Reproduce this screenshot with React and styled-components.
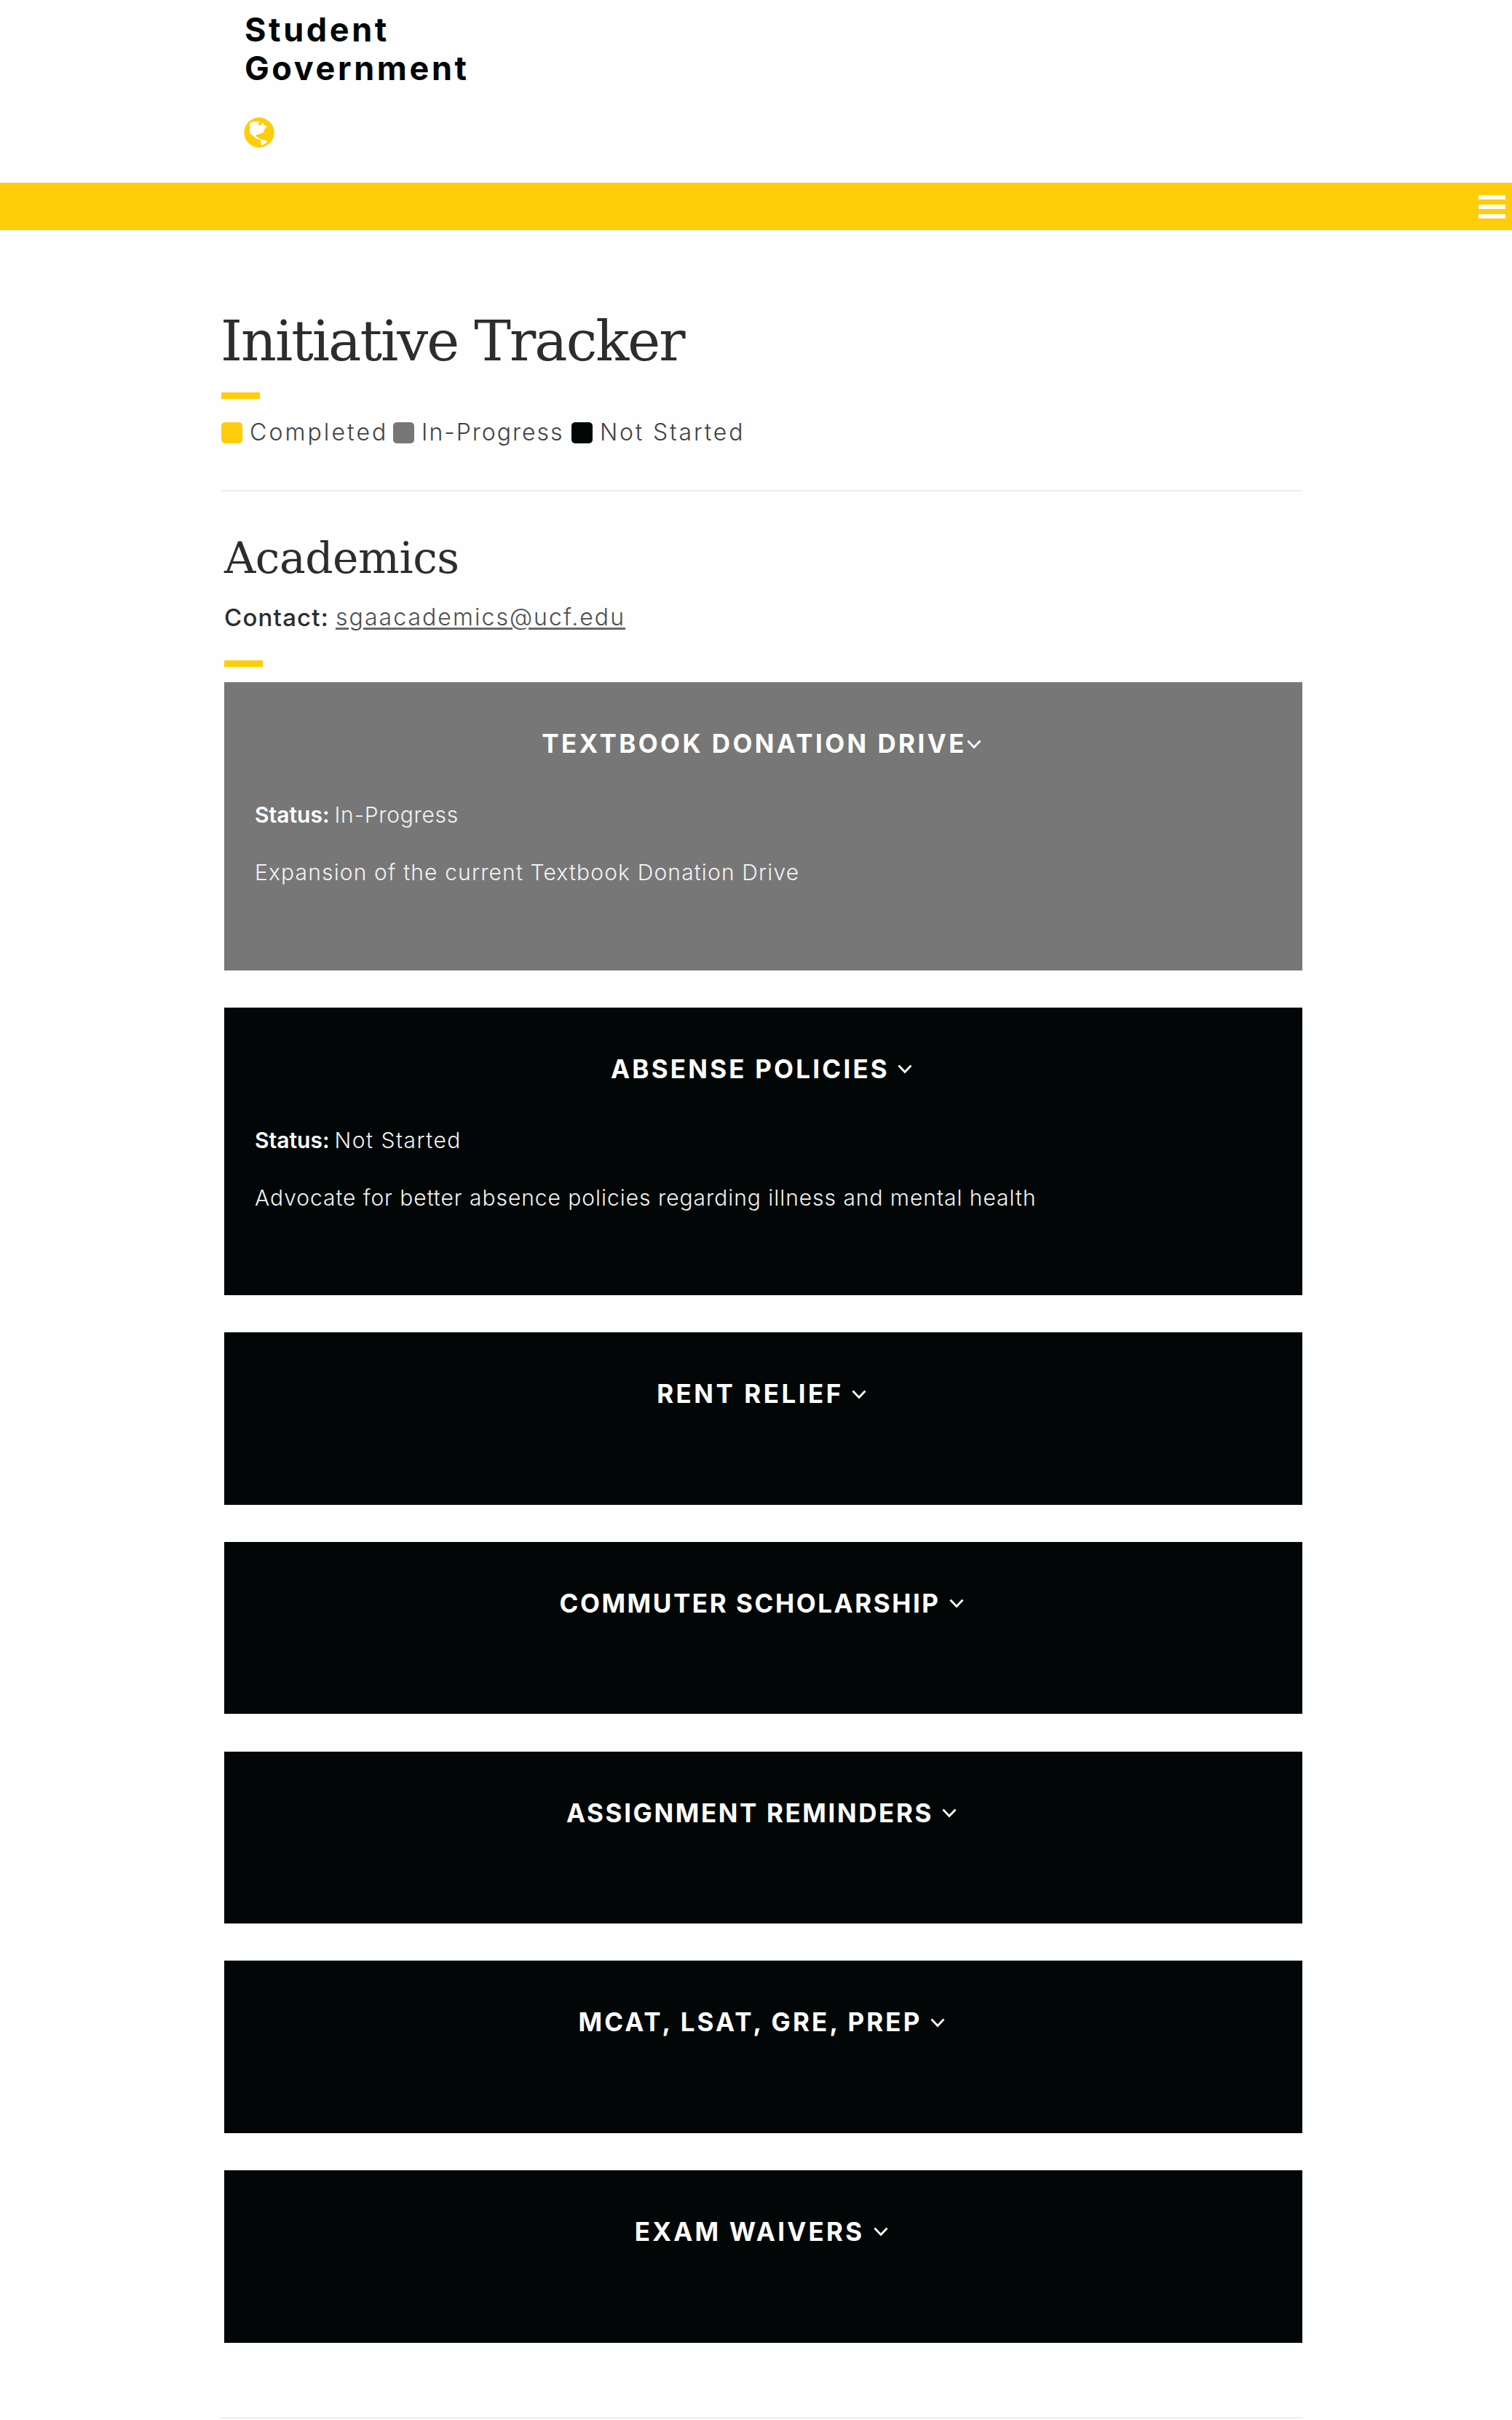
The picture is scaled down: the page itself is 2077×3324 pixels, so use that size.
import React from "react";
import styled, { createGlobalStyle } from "styled-components";

const GlobalStyle = createGlobalStyle`
  * { box-sizing: border-box; }
  body {
    margin: 0;
    background: #fefefe;
    color: #2b2d2e;
    font-family: Inter, "Liberation Sans", sans-serif;
    overflow-x: hidden;
  }
  h1, h2, h3, p, ul { margin: 0; padding: 0; }
`;

const Page = styled.div`
  height: 3324px;
  overflow: hidden;
`;

const Header = styled.header`
  display: flex;
  flex-direction: column;
  align-items: flex-start;
  height: 251px;
  padding: 14px 0 0 336px;
`;

const Logo = styled.a`
  width: 340px;
  font-size: 45px;
  font-weight: 700;
  line-height: 53px;
  letter-spacing: 3.6px;
  color: #020606;
`;

const GlobeIcon = styled.svg`
  display: block;
  width: 42px;
  height: 42px;
  margin: 41px 0 0 -1px;
`;

const NavBar = styled.nav`
  display: flex;
  justify-content: flex-end;
  align-items: center;
  height: 65px;
  padding-right: 9px;
  background: #ffcd0a;
`;

const MenuButton = styled.button`
  display: flex;
  flex-direction: column;
  gap: 7px;
  width: 37px;
  padding: 0;
  border: 0;
  background: none;
`;

const MenuLine = styled.span`
  height: 6px;
  background: #fff;
`;

const Main = styled.main`
  width: 1485px;
  margin-left: 304px;
`;

const Title = styled.h1`
  padding-top: 103px;
  font-family: "DejaVu Serif", serif;
  font-size: 76px;
  font-weight: 400;
  line-height: 100px;
  letter-spacing: -2px;
  text-indent: -1px;
`;

const Dash = styled.div`
  width: 53px;
  height: 9px;
  margin-top: ${(p) => p.$top}px;
  background: #ffcd0a;
`;

const Legend = styled.ul`
  display: flex;
  align-items: center;
  height: 30px;
  margin-top: 31px;
  list-style: none;
`;

const LegendItem = styled.li`
  display: flex;
  align-items: center;
  width: ${(p) => p.$width}px;
  gap: 10px;
  font-size: 32px;
  font-weight: 300;
  line-height: 30px;
  letter-spacing: ${(p) => p.$spacing}px;
  color: #3f4244;
  white-space: nowrap;
`;

const Swatch = styled.span`
  flex: none;
  width: 29px;
  height: 29px;
  border-radius: 5px;
  background: ${(p) => p.$color};
`;

const Rule = styled.hr`
  height: 2px;
  margin: ${(p) => p.$top}px 0 0;
  border: 0;
  background: #eeeeee;
`;

const Section = styled.section`
  padding-left: 4px;
`;

const SectionTitle = styled.h2`
  margin-top: 51px;
  font-family: "DejaVu Serif", serif;
  font-size: 60px;
  font-weight: 400;
  line-height: 80px;
  letter-spacing: -0.5px;
`;

const Contact = styled.p`
  display: flex;
  gap: 9px;
  margin-top: 22px;
  font-size: 33px;
  font-weight: 500;
  line-height: 40px;
  letter-spacing: 1.2px;
`;

const MailLink = styled.a`
  font-size: 32px;
  font-weight: 300;
  letter-spacing: 2.05px;
  color: #4b4e50;
  text-decoration: underline;
  text-decoration-color: #666a6c;
  text-decoration-thickness: 3px;
  text-underline-offset: 3px;
`;

const Cards = styled.div`
  display: flex;
  flex-direction: column;
  gap: 51.1px;
  margin-top: 21px;
`;

const Card = styled.article`
  height: ${(p) => (p.$open ? 395.5 : 236.6)}px;
  padding: 61px 43px 0 42px;
  background: ${(p) => (p.$progress ? "#777777" : "#020606")};
  color: #fff;
`;

const CardTitle = styled.h3`
  display: flex;
  justify-content: center;
  align-items: center;
  height: 46px;
  font-size: 35px;
  font-weight: 700;
  letter-spacing: ${(p) => p.$spacing}px;
  white-space: nowrap;
`;

const Chevron = styled.svg`
  display: block;
  width: 20px;
  height: 13px;
  margin: 2px 4px 0 ${(p) => p.$gap}px;
`;

const CardText = styled.p`
  margin-top: ${(p) => p.$top}px;
  font-size: 30px;
  font-weight: 300;
  line-height: 40px;
  letter-spacing: ${(p) => p.$spacing}px;
  color: #f2f2f2;
  white-space: nowrap;
`;

const Strong = styled.strong`
  margin-right: 7px;
  font-weight: 600;
  letter-spacing: 0;
  color: #fff;
`;

const legend = [
  { label: "Completed", color: "#ffcd0a", width: 236, spacing: 3.1 },
  { label: "In-Progress", color: "#777777", width: 245, spacing: 2 },
  { label: "Not Started", color: "#020606", width: 245, spacing: 2.8 },
];

const initiatives = [
  {
    title: "TEXTBOOK DONATION DRIVE",
    spacing: 3.4,
    gap: 0,
    status: "In-Progress",
    statusSpacing: 0.7,
    text: "Expansion of the current Textbook Donation Drive",
    textSpacing: 1.15,
  },
  {
    title: "ABSENSE POLICIES",
    spacing: 3.2,
    gap: 11,
    status: "Not Started",
    statusSpacing: 1.5,
    text: "Advocate for better absence policies regarding illness and mental health",
    textSpacing: 0.96,
  },
  { title: "RENT RELIEF", spacing: 3.5, gap: 11 },
  { title: "COMMUTER SCHOLARSHIP", spacing: 2.55, gap: 12 },
  { title: "ASSIGNMENT REMINDERS", spacing: 2.6, gap: 12 },
  { title: "MCAT, LSAT, GRE, PREP", spacing: 3.1, gap: 11 },
  { title: "EXAM WAIVERS", spacing: 3.2, gap: 13 },
];

function Globe() {
  return (
    <GlobeIcon viewBox="0 0 126 126" aria-hidden="true">
      <circle cx="63" cy="63" r="62" fill="#ffcd0a" />
      <path
        fill="#fff"
        d="M28 22 42 18 55 19 65 16 62 23 58 29 63 34 74 31 73 25 78 22 83 32 95 37 88 46 82 53 83 62 73 65 64 69 57 72 50 73 50 79 57 82 60 87 69 90 72 93 86 94 96 98 91 107 83 110 76 116 70 113 70 98 66 93 54 89 45 84 38 76 30 72 24 63 23 53 27 44 23 33Z"
      />
    </GlobeIcon>
  );
}

function Initiative({ item }) {
  return (
    <Card $open={Boolean(item.status)} $progress={item.status === "In-Progress"}>
      <CardTitle $spacing={item.spacing}>
        {item.title}
        <Chevron $gap={item.gap} viewBox="0 0 20 13" aria-hidden="true">
          <path d="M1.5 1.5 10 10.5 18.5 1.5" fill="none" stroke="#fff" strokeWidth="2.8" />
        </Chevron>
      </CardTitle>
      {item.status && (
        <>
          <CardText $top={55} $spacing={item.statusSpacing}>
            <Strong>Status:</Strong>
            {item.status}
          </CardText>
          <CardText $top={39} $spacing={item.textSpacing}>
            {item.text}
          </CardText>
        </>
      )}
    </Card>
  );
}

export default function App() {
  return (
    <Page>
      <GlobalStyle />
      <Header>
        <Logo>
          Student
          <br />
          Government
        </Logo>
        <Globe />
      </Header>
      <NavBar>
        <MenuButton aria-label="Menu">
          <MenuLine />
          <MenuLine />
          <MenuLine />
        </MenuButton>
      </NavBar>
      <Main>
        <Title>Initiative Tracker</Title>
        <Dash $top={20} />
        <Legend>
          {legend.map((l) => (
            <LegendItem key={l.label} $width={l.width} $spacing={l.spacing}>
              <Swatch $color={l.color} />
              {l.label}
            </LegendItem>
          ))}
        </Legend>
        <Rule $top={64} />
        <Section>
          <SectionTitle>Academics</SectionTitle>
          <Contact>
            Contact: <MailLink>sgaacademics@ucf.edu</MailLink>
          </Contact>
          <Dash $top={39} />
          <Cards>
            {initiatives.map((item) => (
              <Initiative key={item.title} item={item} />
            ))}
          </Cards>
        </Section>
        <Rule $top={102} />
      </Main>
    </Page>
  );
}
